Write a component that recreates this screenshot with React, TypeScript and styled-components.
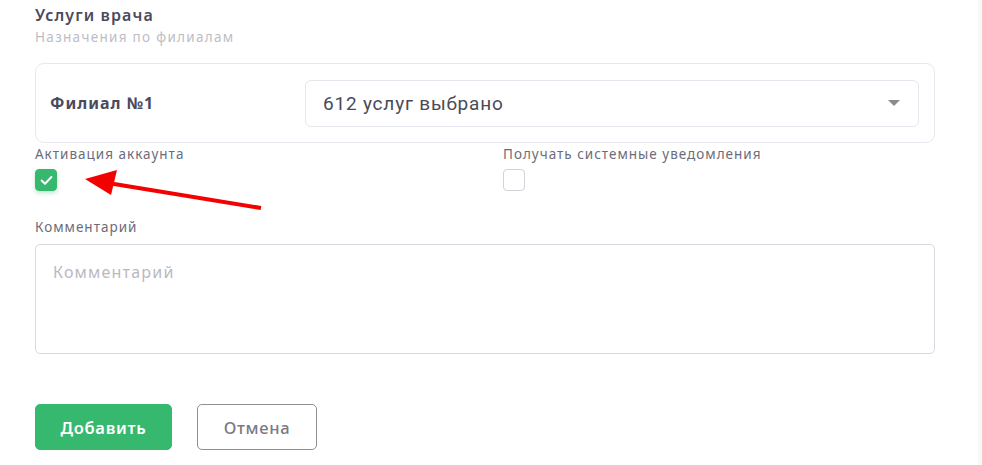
import React from 'react';
import styled, { createGlobalStyle } from 'styled-components';

const GlobalStyle = createGlobalStyle`
  html, body {
    margin: 0;
    padding: 0;
    background: #f8f8f9;
  }
  body {
    font-family: "Noto Sans", "Open Sans", sans-serif;
  }
`;

const Page = styled.div`
  position: relative;
  width: 978px;
  height: 465px;
  box-sizing: border-box;
  padding: 4px 43px 0 35px;
  background: #ffffff;
`;

const Title = styled.h2`
  margin: 0;
  font-size: 16px;
  line-height: 22px;
  font-weight: 600;
  letter-spacing: 1.1px;
  color: #4b4b5c;
`;

const Subtitle = styled.p`
  margin: 3px 0 0;
  font-size: 13.5px;
  line-height: 17px;
  letter-spacing: 1.3px;
  color: #bdbdc6;
`;

const BranchCard = styled.div`
  margin-top: 17px;
  height: 80px;
  box-sizing: border-box;
  border: 1px solid #e7e7f0;
  border-radius: 9px;
  display: grid;
  grid-template-columns: 255px 1fr;
  align-items: center;
  padding: 0 15px 0 14px;
`;

const BranchName = styled.span`
  font-size: 16px;
  font-weight: 700;
  letter-spacing: 1px;
  color: #4a4a5d;
`;

const Select = styled.div`
  height: 47px;
  box-sizing: border-box;
  border: 1px solid #e6e6ee;
  border-radius: 6px;
  display: flex;
  align-items: center;
  justify-content: space-between;
  padding: 0 18px 0 17px;
  font-family: Roboto, "Liberation Sans", sans-serif;
  font-size: 19px;
  letter-spacing: 0.8px;
  color: #4a4a58;
`;

const Caret = styled.span`
  width: 0;
  height: 0;
  border-left: 6px solid transparent;
  border-right: 6px solid transparent;
  border-top: 6px solid #8b8b8b;
`;

const Options = styled.div`
  display: grid;
  grid-template-columns: 1fr 1fr;
  column-gap: 36px;
  margin-top: 2px;
`;

const Field = styled.div`
  display: flex;
  flex-direction: column;
  align-items: flex-start;
`;

const Label = styled.label`
  font-size: 13.5px;
  line-height: 18px;
  letter-spacing: 1px;
  color: #6c6c7a;
`;

const Check = styled.span<{ $checked?: boolean }>`
  margin-top: 6px;
  width: 22px;
  height: 22px;
  box-sizing: border-box;
  border-radius: 4px;
  display: flex;
  align-items: center;
  justify-content: center;
  background: ${p => (p.$checked ? '#36b86f' : '#fff')};
  border: 1px solid ${p => (p.$checked ? '#36b86f' : '#d2d2da')};
  box-shadow: ${p => (p.$checked ? '0 2px 4px rgba(54, 184, 111, 0.35)' : 'none')};
`;

const CommentField = styled(Field)`
  margin-top: 27px;
  align-items: stretch;
`;

const TextArea = styled.div`
  margin-top: 8px;
  height: 110px;
  box-sizing: border-box;
  border: 1px solid #d8d8e0;
  border-radius: 5px;
  padding: 16px 17px;
  font-size: 16px;
  letter-spacing: 1.2px;
  color: #b9b9c2;
`;

const Actions = styled.div`
  display: flex;
  gap: 25px;
  margin-top: 50px;
`;

const Button = styled.button<{ $primary?: boolean }>`
  height: 46px;
  box-sizing: border-box;
  border-radius: 5px;
  padding: 0;
  font-family: "Noto Sans", sans-serif;
  font-size: 16.5px;
  letter-spacing: 0.7px;
  font-weight: ${p => (p.$primary ? 600 : 500)};
  width: ${p => (p.$primary ? '137px' : '120px')};
  background: ${p => (p.$primary ? '#36b86f' : '#fff')};
  color: ${p => (p.$primary ? '#fff' : '#7a7a82')};
  border: 1px solid ${p => (p.$primary ? '#36b86f' : '#8f8f95')};
`;

const Arrow = styled.svg`
  position: absolute;
  left: 80px;
  top: 170px;
`;

const App = () => {
  return (
    <>
      <GlobalStyle />
      <Page>
        <Title>Услуги врача</Title>
        <Subtitle>Назначения по филиалам</Subtitle>
        <BranchCard>
          <BranchName>Филиал №1</BranchName>
          <Select>
            612 услуг выбрано
            <Caret />
          </Select>
        </BranchCard>
        <Options>
          <Field>
            <Label>Активация аккаунта</Label>
            <Check $checked>
              <svg width="13" height="11" viewBox="0 0 13 11">
                <path d="M1.6 5.6 L5 8.8 L11.4 2" fill="none" stroke="#fff" strokeWidth="2" strokeLinecap="round" strokeLinejoin="round" />
              </svg>
            </Check>
          </Field>
          <Field>
            <Label>Получать системные уведомления</Label>
            <Check />
          </Field>
        </Options>
        <CommentField>
          <Label>Комментарий</Label>
          <TextArea>Комментарий</TextArea>
        </CommentField>
        <Actions>
          <Button $primary>Добавить</Button>
          <Button>Отмена</Button>
        </Actions>
        <Arrow width="190" height="45" viewBox="0 0 190 45">
          <line x1="181" y1="38" x2="28" y2="13" stroke="#f30000" strokeWidth="4" />
          <polygon points="5,9 37,0 31,25" fill="#f30000" />
        </Arrow>
      </Page>
    </>
  );
};

export default App;
